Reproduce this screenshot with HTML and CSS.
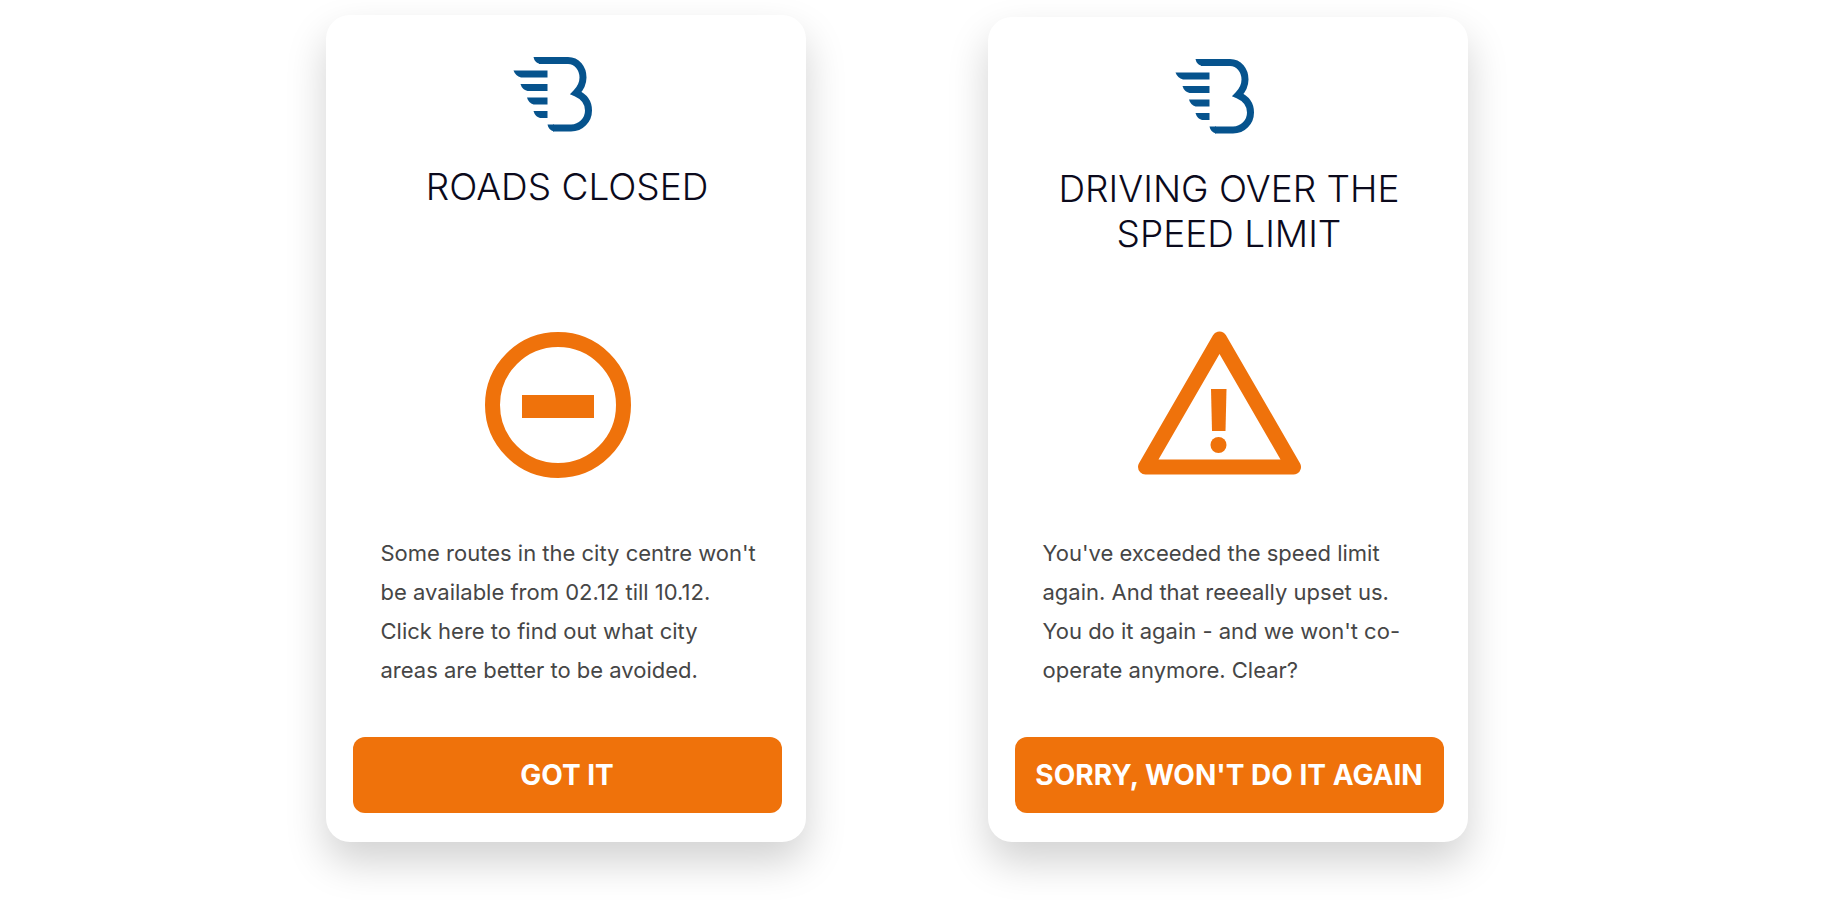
FILE: index.html
```
<!DOCTYPE html>
<html lang="en">
<head>
  <meta charset="UTF-8">
  <meta name="viewport" content="width=device-width, initial-scale=1.0">
  <title>Notifications</title>
  <link rel="stylesheet" href="styles.css">
</head>
<body>
  <!-- Logo shared by both cards -->
  <svg class="sprite" aria-hidden="true">
    <symbol id="logo" viewBox="0 0 80 75">
      <path d="M26 3.5H55C64 3.5 70 11.500 70 20.5C70 26.500 67.500 31.500 63 36C71 39.500 75.500 46 75.500 53.500C75.500 63 68 71 58 71H40" fill="none" stroke="currentColor" stroke-width="7" stroke-miterlimit="10"/>
      <path d="M20.500 0H27V7Q21.500 5.500 20.500 0ZM34.500 67.500H41V74.500Q35.500 73 34.500 67.500Z"/>
      <path d="M0.500 13.500H34.500V20.500H8Q2.500 19 0.500 13.500Z"/>
      <path d="M7.500 27H34.500V34H14.500Q9 32.500 7.500 27Z"/>
      <path d="M14 40.500H34.500V47.500H20.500Q15.500 46 14 40.500Z"/>
      <path d="M20.500 54H34.500V61H27Q22 59.500 20.500 54Z"/>
    </symbol>
  </svg>

  <main class="cards">
    <section class="card card-closed">
      <svg class="logo" role="img" aria-label="Logo"><use href="#logo"/></svg>
      <h2>ROADS CLOSED</h2>
      <svg class="icon" viewBox="0 0 164 148" aria-hidden="true">
        <circle cx="82" cy="74" r="65.500" fill="none" stroke="currentColor" stroke-width="15"/>
        <rect x="46" y="64" width="72" height="23"/>
      </svg>
      <p>Some routes in the city centre won't be available from 02.12 till 10.12. Click here to find out what city areas are better to be avoided.</p>
      <button type="button">GOT IT</button>
    </section>

    <section class="card card-speed">
      <svg class="logo" role="img" aria-label="Logo"><use href="#logo"/></svg>
      <h2>DRIVING OVER THE SPEED LIMIT</h2>
      <svg class="icon" viewBox="0 0 164 148" aria-hidden="true">
        <path d="M81.500 8L155.500 136H7.500Z" fill="none" stroke="currentColor" stroke-width="15" stroke-linejoin="round"/>
        <path d="M73 58H88.500L87.500 100H74Z"/>
        <circle cx="80.500" cy="114" r="8"/>
      </svg>
      <p>You've exceeded the speed limit again. And that reeeally upset us. You do it again - and we won't co-operate anymore. Clear?</p>
      <button type="button">SORRY, WON'T DO IT AGAIN</button>
    </section>
  </main>
</body>
</html>
```
FILE: styles.css
```
* {
  box-sizing: border-box;
}

body {
  margin: 0;
  font-family: Inter, "Liberation Sans", sans-serif;
  background-color: #ffffff;
}

.sprite {
  display: none;
}

.cards {
  display: flex;
  flex-wrap: wrap;
  justify-content: center;
  align-items: flex-end;
  gap: 40px 182px;
  padding: 15px 28px 58px 0;
}

.card {
  display: flex;
  flex-direction: column;
  align-items: center;
  width: 480px;
  padding: 42px 24px 29px 27px;
  background: #ffffff;
  border-radius: 24px;
  box-shadow: 0 20px 40px rgba(0, 0, 0, 0.18);
}

.card-closed {
  min-height: 827px;
}

.card-speed {
  min-height: 825px;
}

.logo {
  width: 80px;
  height: 75px;
  margin-right: 28px;
  color: #06538d;
  fill: currentColor;
}

h2 {
  margin: 32px 0 0;
  font-size: 37px;
  font-weight: 300;
  line-height: 45px;
  text-align: center;
  color: #0b0a1c;
}

.icon {
  width: 164px;
  height: 148px;
  margin-top: auto;
  margin-right: 18px;
  overflow: visible;
  color: #ef720b;
  fill: currentColor;
}

p {
  align-self: stretch;
  margin: 55px 24px 47px 28px;
  font-size: 22px;
  line-height: 39px;
  color: #464646;
}

button {
  align-self: stretch;
  height: 76px;
  padding: 0;
  border: none;
  border-radius: 12px;
  background-color: #ef720b;
  color: #ffffff;
  font-family: inherit;
  font-size: 28px;
  font-weight: 700;
  cursor: pointer;
}

button:hover {
  background-color: #d96508;
}
```
